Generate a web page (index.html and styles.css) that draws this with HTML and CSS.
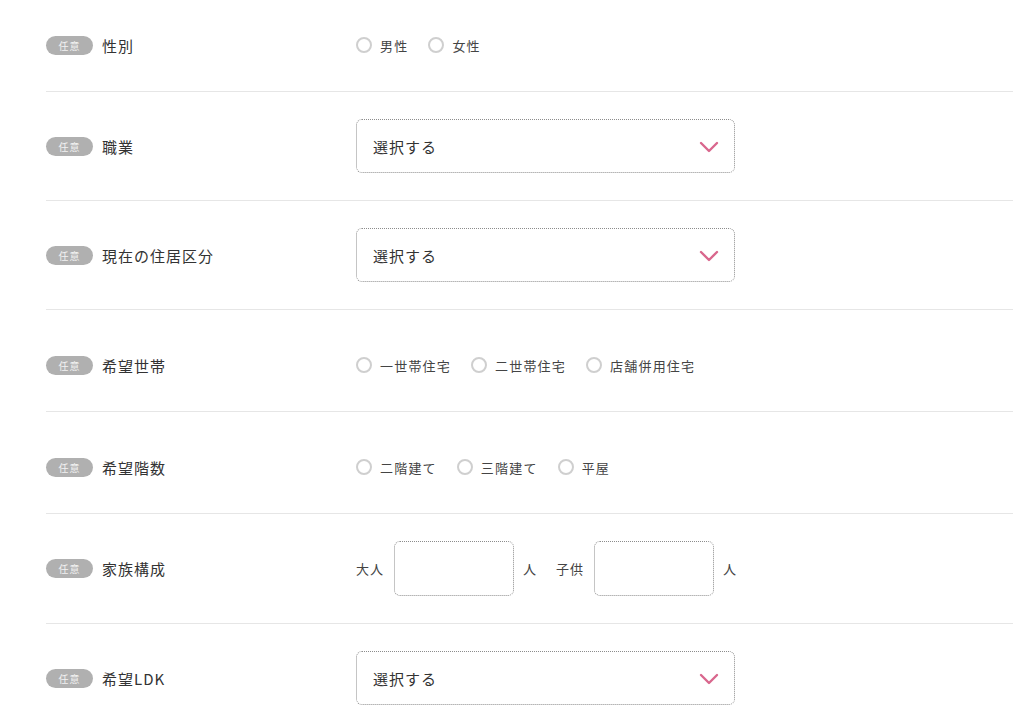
FILE: index.html
```html
<!DOCTYPE html>
<html lang="ja">
<head>
  <meta charset="utf-8">
  <title>お問い合わせフォーム</title>
  <link rel="stylesheet" href="styles.css">
</head>
<body>
  <div class="form-table">
    <div class="form-row radio-row">
      <div class="form-head"><span class="badge">任意</span><span class="head-text">性別</span></div>
      <div class="form-body">
        <label class="radio"><input type="radio" name="sex"><span class="mark"></span>男性</label>
        <label class="radio"><input type="radio" name="sex"><span class="mark"></span>女性</label>
      </div>
    </div>

    <div class="form-row">
      <div class="form-head"><span class="badge">任意</span><span class="head-text">職業</span></div>
      <div class="form-body">
        <div class="select-box">
          <span>選択する</span>
          <svg class="chevron" width="20" height="12" viewBox="0 0 20 12"><path d="M2 2 L10 10 L18 2" fill="none" stroke="#d9678d" stroke-width="2.4" stroke-linecap="round" stroke-linejoin="round"/></svg>
        </div>
      </div>
    </div>

    <div class="form-row">
      <div class="form-head"><span class="badge">任意</span><span class="head-text">現在の住居区分</span></div>
      <div class="form-body">
        <div class="select-box">
          <span>選択する</span>
          <svg class="chevron" width="20" height="12" viewBox="0 0 20 12"><path d="M2 2 L10 10 L18 2" fill="none" stroke="#d9678d" stroke-width="2.4" stroke-linecap="round" stroke-linejoin="round"/></svg>
        </div>
      </div>
    </div>

    <div class="form-row radio-row">
      <div class="form-head"><span class="badge">任意</span><span class="head-text">希望世帯</span></div>
      <div class="form-body">
        <label class="radio"><input type="radio" name="household"><span class="mark"></span>一世帯住宅</label>
        <label class="radio"><input type="radio" name="household"><span class="mark"></span>二世帯住宅</label>
        <label class="radio"><input type="radio" name="household"><span class="mark"></span>店舗併用住宅</label>
      </div>
    </div>

    <div class="form-row radio-row">
      <div class="form-head"><span class="badge">任意</span><span class="head-text">希望階数</span></div>
      <div class="form-body">
        <label class="radio"><input type="radio" name="floors"><span class="mark"></span>二階建て</label>
        <label class="radio"><input type="radio" name="floors"><span class="mark"></span>三階建て</label>
        <label class="radio"><input type="radio" name="floors"><span class="mark"></span>平屋</label>
      </div>
    </div>

    <div class="form-row">
      <div class="form-head"><span class="badge">任意</span><span class="head-text">家族構成</span></div>
      <div class="form-body family">
        <span class="unit">大人</span>
        <input type="text" class="num-input">
        <span class="unit after">人</span>
        <span class="unit">子供</span>
        <input type="text" class="num-input">
        <span class="unit after">人</span>
      </div>
    </div>

    <div class="form-row">
      <div class="form-head"><span class="badge">任意</span><span class="head-text">希望LDK</span></div>
      <div class="form-body">
        <div class="select-box">
          <span>選択する</span>
          <svg class="chevron" width="20" height="12" viewBox="0 0 20 12"><path d="M2 2 L10 10 L18 2" fill="none" stroke="#d9678d" stroke-width="2.4" stroke-linecap="round" stroke-linejoin="round"/></svg>
        </div>
      </div>
    </div>
  </div>
</body>
</html>
```

FILE: styles.css
```css
body {
  margin: 0;
  background: #fff;
  color: #333;
  font-family: "Noto Sans CJK JP", "Noto Sans", sans-serif;
}

.form-table {
  margin: 0 11px 0 46px;
}

.form-row {
  display: flex;
  align-items: center;
  padding: 27px 0;
  border-bottom: 1px solid #e6e6e6;
}

.radio-row {
  padding: 36px 0 27px;
  min-height: 38px;
}

.form-row:first-child {
  padding-top: 26px;
}

.form-head {
  width: 310px;
  flex-shrink: 0;
  display: flex;
  align-items: center;
}

.badge {
  display: inline-block;
  width: 47px;
  height: 19px;
  line-height: 19px;
  border-radius: 10px;
  background: #b0b0b0;
  color: #f2f2f2;
  font-size: 10px;
  text-align: center;
  letter-spacing: 1px;
}

.head-text {
  margin-left: 9px;
  font-size: 15px;
  letter-spacing: 1px;
  color: #333;
}

.form-body {
  display: flex;
  align-items: center;
}

.radio {
  display: flex;
  align-items: center;
  margin-right: 20px;
  font-size: 13px;
  letter-spacing: 1.2px;
  color: #444;
  cursor: pointer;
}

.radio input {
  display: none;
}

.radio .mark {
  width: 12px;
  height: 12px;
  border: 2px solid #cfcfcf;
  border-radius: 50%;
  margin-right: 8px;
}

.select-box {
  box-sizing: border-box;
  width: 379px;
  height: 54px;
  border: 1px dotted #8c8c8c;
  border-radius: 6px;
  display: flex;
  align-items: center;
  justify-content: space-between;
  padding: 0 15px 0 16px;
  font-size: 15px;
  letter-spacing: 1px;
  color: #333;
}

.chevron {
  margin-top: 2px;
}

.family .unit {
  font-size: 13px;
  letter-spacing: 1px;
  color: #444;
}

.family .after {
  margin-right: 19px;
}

.num-input {
  box-sizing: border-box;
  width: 120px;
  height: 55px;
  margin: 0 9px 0 10px;
  border: 1px dotted #8c8c8c;
  border-radius: 6px;
  outline: none;
}
```
